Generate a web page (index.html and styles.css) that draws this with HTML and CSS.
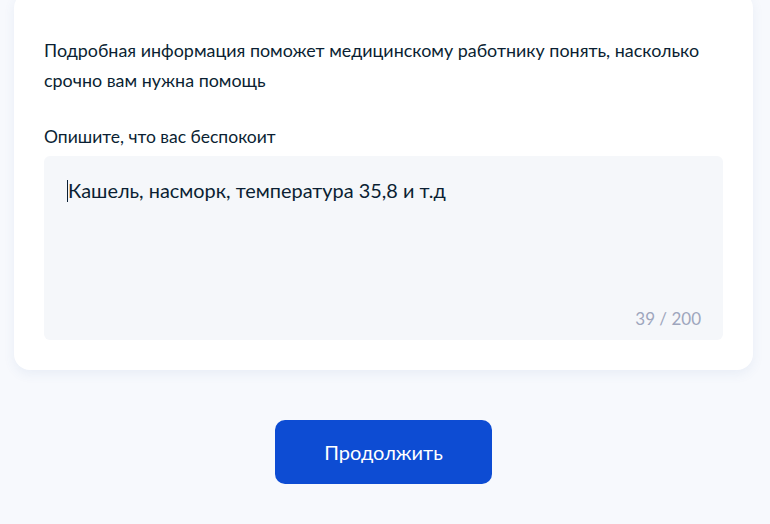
FILE: index.html
```html
<!DOCTYPE html>
<html>
<head>
    <meta charset="UTF-8">
    <title>Описание симптомов</title>
    <link rel="stylesheet" href="styles.css">
</head>
<body>
    <div class="card">
        <p class="hint">Подробная информация поможет медицинскому работнику понять, насколько срочно вам нужна помощь</p>

        <label class="field-label" for="complaint">Опишите, что вас беспокоит</label>
        <div class="field" id="complaint">
            <div class="field-text"><span class="caret"></span>Кашель, насморк, температура 35,8 и т.д</div>
            <div class="counter">39 / 200</div>
        </div>
    </div>

    <div class="actions">
        <button type="button" class="btn-primary">Продолжить</button>
    </div>
</body>
</html>
```

FILE: styles.css
```css
body {
    margin: 0;
    background: #f7f9fd;
    font-family: Lato, "Open Sans", sans-serif;
    color: #0b1f33;
}

.card {
    margin: -8px 17px 0 14px;
    padding: 43px 30px 30px;
    background: #fff;
    border-radius: 16px;
    box-shadow: 0 4px 12px rgba(70, 100, 160, 0.08);
}

.hint {
    margin: 0;
    font-size: 17.9px;
    line-height: 30px;
}

.field-label {
    display: block;
    margin-top: 30px;
    font-size: 17.5px;
    line-height: 24px;
}

.field {
    position: relative;
    margin-top: 7px;
    height: 184px;
    box-sizing: border-box;
    padding: 22px 24px;
    background: #f5f7fa;
    border-radius: 6px;
}

.field-text {
    font-size: 19.9px;
    line-height: 24px;
}

.caret {
    display: inline-block;
    width: 1px;
    height: 22px;
    margin: 0 0 -4px -1px;
    background: #0b1f33;
}

.counter {
    position: absolute;
    right: 22px;
    bottom: 9px;
    font-size: 17px;
    line-height: 24px;
    color: #9ea6bd;
}

.actions {
    display: flex;
    justify-content: center;
    padding-top: 50px;
}

.btn-primary {
    width: 217px;
    height: 64px;
    margin-right: 3px;
    border: none;
    border-radius: 10px;
    background: #0d4cd3;
    color: #fff;
    font-family: Lato, "Open Sans", sans-serif;
    font-size: 20px;
    cursor: pointer;
}
```
